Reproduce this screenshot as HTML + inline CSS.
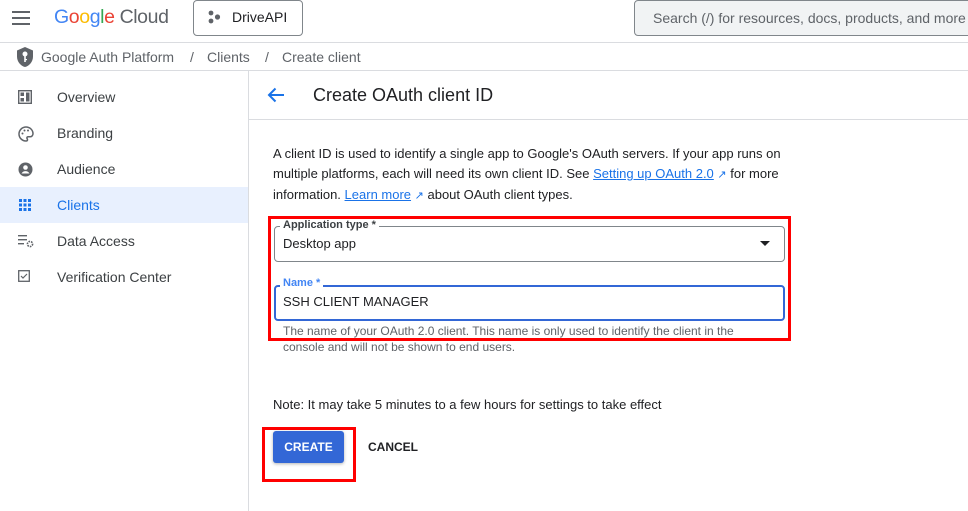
<!DOCTYPE html>
<html><head><style>
*{box-sizing:border-box;margin:0;padding:0}
body{width:968px;height:511px;overflow:hidden;background:#fff;font-family:"Liberation Sans",Arial,sans-serif;color:#202124;position:relative}
.a{position:absolute}
.hl{position:absolute;height:1px;background:#dadce0}
.nav{position:absolute;left:0;width:248px;height:36px;font-size:14px;color:#3c4043}
.nav span{position:absolute;left:57px;top:10px}
.nav svg{position:absolute;left:18px;top:11px}
p.t{font-size:13px;line-height:20px;color:#202124}
a{color:#1a73e8;text-decoration:underline}
</style></head><body>
<div class="a" style="left:12px;top:11px;width:18px;height:2px;background:#5f6368;box-shadow:0 6px 0 #5f6368,0 12px 0 #5f6368"></div>
<div class="a" style="left:54px;top:6px;font-size:19.5px;letter-spacing:-0.4px"><span style="color:#4285f4">G</span><span style="color:#ea4335">o</span><span style="color:#fbbc04">o</span><span style="color:#4285f4">g</span><span style="color:#34a853">l</span><span style="color:#ea4335">e</span> <span style="color:#5f6368">Cloud</span></div>
<div class="a" style="left:193px;top:0;width:110px;height:36px;border:1px solid #80868b;border-radius:4px"></div>
<svg class="a" style="left:207px;top:10px" width="14" height="14"><circle cx="4" cy="3" r="2.4" fill="#5f6368"/><circle cx="4" cy="11" r="2.4" fill="#5f6368"/><circle cx="10.5" cy="7" r="2.6" fill="#5f6368"/></svg>
<div class="a" style="left:232px;top:9px;font-size:14px;color:#202124">DriveAPI</div>
<div class="a" style="left:634px;top:0;width:340px;height:36px;background:#f1f3f4;border:1px solid #80868b;border-radius:4px"></div>
<div class="a" style="left:653px;top:10px;font-size:14px;color:#5f6368">Search (/) for resources, docs, products, and more</div>
<div class="hl" style="left:0;top:42px;width:968px"></div>
<svg class="a" style="left:16px;top:46px" width="18" height="22" viewBox="0 0 18 22"><path d="M9 1L1 4.5v6c0 5 3.5 9.5 8 10.5 4.5-1 8-5.5 8-10.5v-6z" fill="#5f6368"/><circle cx="9" cy="8" r="2.5" fill="#fff"/><rect x="8.2" y="10" width="1.6" height="6" fill="#fff"/><rect x="9" y="13" width="2" height="1.2" fill="#fff"/></svg>
<div class="a" style="left:41px;top:49px;font-size:14px;color:#5f6368">Google Auth Platform</div>
<div class="a" style="left:190px;top:49px;font-size:14px;color:#5f6368">/</div>
<div class="a" style="left:207px;top:49px;font-size:14px;color:#5f6368">Clients</div>
<div class="a" style="left:265px;top:49px;font-size:14px;color:#5f6368">/</div>
<div class="a" style="left:282px;top:49px;font-size:14px;color:#5f6368">Create client</div>
<div class="hl" style="left:0;top:70px;width:968px"></div>
<div class="a" style="left:248px;top:71px;width:1px;height:440px;background:#dadce0"></div>
<div class="nav" style="top:79px"><svg width="14" height="14"><rect x="0.5" y="0.5" width="13" height="13" fill="none" stroke="#5f6368" stroke-width="1.8"/><rect x="2.5" y="2.5" width="3.5" height="3.5" fill="#5f6368"/><rect x="2.5" y="8" width="3.5" height="3.5" fill="#5f6368"/><rect x="8" y="2.5" width="3.5" height="9" fill="#5f6368"/></svg><span>Overview</span></div>
<div class="nav" style="top:115px"><svg width="16" height="16"><path d="M8 1a7 7 0 000 14c1 0 1.5-.6 1.5-1.3 0-.8-.6-1-.6-1.7 0-.7.6-1.2 1.3-1.2H12a3 3 0 003-3C15 4 12 1 8 1z" fill="none" stroke="#5f6368" stroke-width="1.5"/><circle cx="4.5" cy="7.5" r="1" fill="#5f6368"/><circle cx="6.5" cy="4.5" r="1" fill="#5f6368"/><circle cx="10" cy="4.5" r="1" fill="#5f6368"/></svg><span>Branding</span></div>
<div class="nav" style="top:151px"><svg width="15" height="15"><circle cx="7.5" cy="7.5" r="7" fill="#5f6368"/><circle cx="7.5" cy="5.5" r="2.3" fill="#fff"/><path d="M3.5 11.5c1-1.8 2.5-2.4 4-2.4s3 .6 4 2.4" fill="#fff"/></svg><span>Audience</span></div>
<div class="nav" style="top:187px;background:#e8f0fe"><svg width="14" height="14" fill="#1a73e8"><rect x="1" y="1" width="3" height="3"/><rect x="5.5" y="1" width="3" height="3"/><rect x="10" y="1" width="3" height="3"/><rect x="1" y="5.5" width="3" height="3"/><rect x="5.5" y="5.5" width="3" height="3"/><rect x="10" y="5.5" width="3" height="3"/><rect x="1" y="10" width="3" height="3"/><rect x="5.5" y="10" width="3" height="3"/><rect x="10" y="10" width="3" height="3"/></svg><span style="color:#1a73e8">Clients</span></div>
<div class="nav" style="top:223px"><svg width="16" height="14"><rect x="0" y="1" width="9" height="1.4" fill="#5f6368"/><rect x="0" y="5" width="9" height="1.4" fill="#5f6368"/><rect x="0" y="9" width="6" height="1.4" fill="#5f6368"/><circle cx="12" cy="10" r="2.6" fill="none" stroke="#5f6368" stroke-width="1.6" stroke-dasharray="1.6 1"/></svg><span>Data Access</span></div>
<div class="nav" style="top:259px"><svg width="12" height="12"><rect x="0.7" y="0.7" width="10.6" height="10.6" fill="none" stroke="#5f6368" stroke-width="1.3"/><path d="M3 6l2 2 4-4" fill="none" stroke="#5f6368" stroke-width="1.2"/></svg><span>Verification Center</span></div>
<svg class="a" style="left:267px;top:87px" width="18" height="16"><path d="M17 8H2M8.5 1.5L2 8l6.5 6.5" fill="none" stroke="#1a73e8" stroke-width="2"/></svg>
<div class="a" style="left:313px;top:85px;font-size:18px;color:#202124">Create OAuth client ID</div>
<div class="hl" style="left:249px;top:119px;width:719px"></div>
<p class="t a" style="left:273px;top:144px;width:520px">A client ID is used to identify a single app to Google's OAuth servers. If your app runs on multiple platforms, each will need its own client ID. See <a>Setting up OAuth 2.0</a> <span style="color:#1a73e8;font-size:11px">&#x2197;</span> for more information. <a>Learn more</a> <span style="color:#1a73e8;font-size:11px">&#x2197;</span> about OAuth client types.</p>
<div class="a" style="left:268px;top:216px;width:523px;height:125px;border:3px solid #f00"></div>
<div class="a" style="left:274px;top:226px;width:511px;height:36px;border:1px solid #80868b;border-radius:4px"></div>
<div class="a" style="left:280px;top:219px;background:#fff;padding:0 3px;font-size:11px;font-weight:bold;color:#3c4043">Application type *</div>
<div class="a" style="left:283px;top:236px;font-size:13px">Desktop app</div>
<div class="a" style="left:760px;top:241px;width:0;height:0;border-left:5px solid transparent;border-right:5px solid transparent;border-top:5px solid #202124"></div>
<div class="a" style="left:274px;top:285px;width:511px;height:36px;border:2px solid #3367d6;border-radius:4px"></div>
<div class="a" style="left:280px;top:277px;background:#fff;padding:0 3px;font-size:11px;font-weight:bold;color:#4285f4">Name *</div>
<div class="a" style="left:283px;top:294px;font-size:13px">SSH CLIENT MANAGER</div>
<div class="a" style="left:283px;top:323px;width:470px;font-size:12px;line-height:16px;color:#5f6368">The name of your OAuth 2.0 client. This name is only used to identify the client in the console and will not be shown to end users.</div>
<div class="a" style="left:273px;top:397px;font-size:13px">Note: It may take 5 minutes to a few hours for settings to take effect</div>
<div class="a" style="left:262px;top:427px;width:94px;height:55px;border:3px solid #f00"></div>
<div class="a" style="left:273px;top:431px;width:71px;height:32px;background:#3367d6;border-radius:3px;box-shadow:0 1px 3px rgba(0,0,0,.3);color:#fff;font-size:12px;font-weight:bold;text-align:center;line-height:32px">CREATE</div>
<div class="a" style="left:368px;top:440px;font-size:12px;font-weight:bold;color:#202124">CANCEL</div>
</body></html>
